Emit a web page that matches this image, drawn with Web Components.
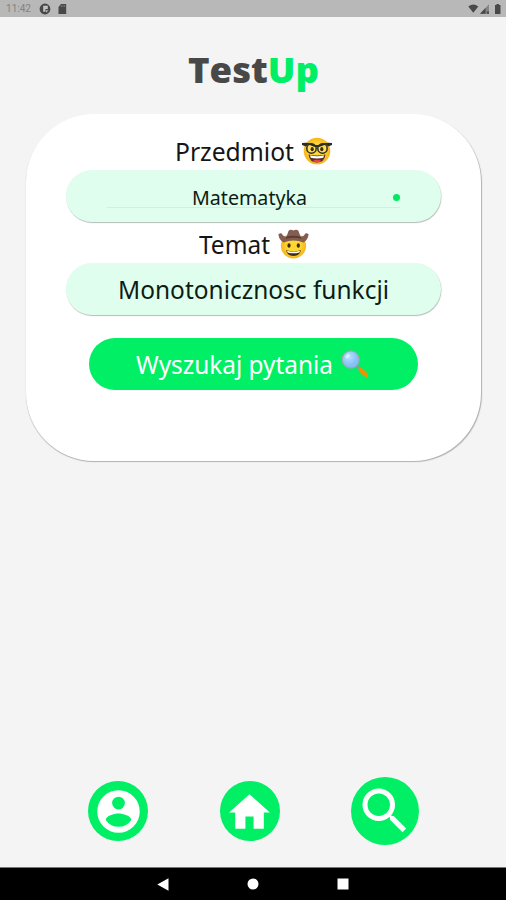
<!DOCTYPE html>
<html lang="pl">
<head>
<meta charset="utf-8">
<title>TestUp</title>
<style>
html,body{margin:0;height:100%;overflow:hidden}
</style>
</head>
<body>
<test-app></test-app>
<script>
const define = (name, html) => {
  const tpl = document.createElement('template');
  tpl.innerHTML = html;
  customElements.define(name, class extends HTMLElement {
    constructor() {
      super();
      this.attachShadow({mode: 'open'}).append(tpl.content.cloneNode(true));
    }
  });
};

/* Text set to a given width: the glyphs are scaled horizontally. */
customElements.define('fit-text', class extends HTMLElement {
  constructor() {
    super();
    this.attachShadow({mode: 'open'}).innerHTML = `<style>
      :host{display:block;white-space:nowrap;flex:none}
      span{display:inline-block;transform-origin:0 50%}
    </style><span><slot></slot></span>`;
  }
  connectedCallback() {
    const w = +this.getAttribute('w');
    this.style.width = w + 'px';
    const s = this.shadowRoot.querySelector('span');
    s.style.transform = `scaleX(${w / s.getBoundingClientRect().width})`;
  }
});

define('status-bar', `<style>
  :host{display:flex;box-sizing:border-box;height:17px;flex:none;background:#b8b8b8;align-items:center;padding:1px 2px 0 6px;color:#828282;font:10.5px/16px Roboto,sans-serif}
  svg{display:block}
  .l{margin-left:8px}.c{margin-left:7px}.r{margin-left:auto}
</style>
<fit-text w="25">11:42</fit-text>
<svg class="l" width="12" height="12" viewBox="0 0 12 12"><circle cx="6" cy="6" r="4.7" fill="#484848" stroke="#484848" stroke-width="1.4"/><path d="M4.2 2.800H8.800V6H6.500V8.800H4.200Z" fill="#c2c2c2"/><path d="M7 7.200H9.600L7 9.800Z" fill="#b8b8b8"/></svg>
<svg class="c" width="9" height="10" viewBox="0 0 9 10"><path d="M3 0H8.2V10H.5V3Z" fill="#484848"/><path d="M3.3 1.2V3M5 1.2V3M6.7 1.2V3" stroke="#8c8c8c" stroke-width=".7"/></svg>
<svg class="r" width="36" height="12" viewBox="0 0 36 12"><path d="M.3 3.500Q5.300-.3 10.300 3.500L5.300 9.800Z" fill="#484848"/><path d="M21 1.200V10.800H12Z" fill="#858585"/><path d="M17.500 5V10.800H12ZM18.800 8.500H21V10.800H18.800Z" fill="#484848"/><path d="M28.500 1H31V2H32.500V11H27V2H28.500Z" fill="#484848"/></svg>`);

define('app-logo', `<style>
  :host{display:flex;justify-content:center;flex:none;height:97px;box-sizing:border-box;padding-top:28px;font:800 36px/50px "Open Sans",sans-serif;font-kerning:none;color:#484848}
  b{font-weight:800;color:#00ef65}
</style><fit-text w="131">Test<b>Up</b></fit-text>`);

define('emoji-nerd', `<style>:host{display:block;flex:none}svg{display:block}</style>
<svg width="30" height="28" viewBox="0 0 30 28">
  <defs><radialGradient id="g"><stop offset=".5" stop-color="#fdd835"/><stop offset="1" stop-color="#f6b51e"/></radialGradient></defs>
  <circle cx="15" cy="14" r="13.3" fill="url(#g)"/>
  <path d="M6.500 17.500Q15 19.700 23.500 17.500Q22.500 25.500 15 25.500Q7.500 25.500 6.500 17.500Z" fill="#5a3329"/>
  <path d="M10.500 24Q15 21.400 19.500 24Q15 26.500 10.500 24Z" fill="#ef3f55"/>
  <path d="M8 18.300Q15 20 22 18.300L21.300 20.800Q15 22.300 8.700 20.800Z" fill="#fff"/>
  <circle cx="9.500" cy="11.500" r="4.700" fill="#ffe050" stroke="#2b2b2b" stroke-width="1.500"/>
  <circle cx="20.500" cy="11.500" r="4.700" fill="#ffe050" stroke="#2b2b2b" stroke-width="1.500"/>
  <path d="M0 6Q7 4.800 13 8H17Q23 4.800 30 6V8L26 9.500L24 7.500L17 10H13L6 7.500L4 9.500L0 8Z" fill="#2b2b2b"/>
  <ellipse cx="10.200" cy="12.200" rx="1.600" ry="2.100" fill="#422b0d"/><ellipse cx="19.800" cy="12.200" rx="1.600" ry="2.100" fill="#422b0d"/>
</svg>`);

define('emoji-cowboy', `<style>:host{display:block;flex:none}svg{display:block}</style>
<svg width="31" height="30" viewBox="0 0 31 30">
  <defs><radialGradient id="g"><stop offset=".5" stop-color="#fdd835"/><stop offset="1" stop-color="#f6b51e"/></radialGradient></defs>
  <circle cx="15.500" cy="16.800" r="12.600" fill="url(#g)"/>
  <ellipse cx="11" cy="16.500" rx="1.600" ry="2.300" fill="#422b0d"/><ellipse cx="20.300" cy="16.500" rx="1.600" ry="2.300" fill="#422b0d"/>
  <path d="M8 21.200Q15.500 23.500 23 21.200Q21.500 27 15.500 27Q9.500 27 8 21.200Z" fill="#422b0d"/>
  <path d="M9 21.700Q15.500 23.500 22 21.700L21.500 23.400Q15.500 25.100 9.500 23.400Z" fill="#fff"/>
  <path d="M.4 5.200Q3.500 3 4.300 5.600Q5 7.500 8.500 7.700L10.500 2Q12 .1 15.500 1.400Q19 .1 20.500 2L22.500 7.700Q26 7.500 26.700 5.600Q27.500 3 30.600 5.200Q30 11 25.500 13.500Q15.500 9.500 5.500 13.500Q1 11 .4 5.200Z" fill="#855c52"/>
  <path d="M8.300 7.700Q15.500 5.700 22.700 7.700L23.300 9.800Q15.500 7.700 7.700 9.800Z" fill="#593d36"/>
</svg>`);

define('emoji-lens', `<style>:host{display:block;flex:none}svg{display:block}</style>
<svg width="28" height="28" viewBox="0 0 28 28">
  <defs><radialGradient id="g" cx=".4" cy=".35"><stop offset="0" stop-color="#b9e2ff"/><stop offset="1" stop-color="#82c0f6"/></radialGradient></defs>
  <path d="M15.500 16L18.500 19" stroke="#90979b" stroke-width="3"/>
  <path d="M17 19.500L20 17.500Q25.500 21.500 27.300 25.500Q27.500 28 25 27.300Q20 24.500 17 19.500Z" fill="#fb8c00"/>
  <circle cx="9.700" cy="9.500" r="8.600" fill="url(#g)" stroke="#9ba7ad" stroke-width="1.200"/>
  <ellipse cx="6.700" cy="6.200" rx="2.600" ry="1.600" fill="#d8f0ff" transform="rotate(-40 6.700 6.200)"/>
</svg>`);

define('field-label', `<style>
  :host{display:flex;justify-content:center;align-items:center;gap:8px;flex:none;font-size:25.5px;line-height:34px;color:#151515}
</style><slot></slot>`);

define('field-pill', `<style>
  :host{display:grid;place-items:center;width:375px;height:52px;flex:none;border-radius:26px;background:#e0feee;box-shadow:.5px 1px 1px #b4bdb8;font-size:25.5px;line-height:34px;color:#0c1c14}
</style><slot></slot>`);

define('select-box', `<style>
  :host{display:grid;grid-template-columns:85px auto 1fr;align-items:center;width:293px;height:22px;line-height:22px;border-bottom:1px solid #d0efe0;font-size:20px;padding-top:1px;box-sizing:border-box}
  i{grid-column:3;justify-self:end;width:7px;height:7px;border-radius:50%;background:#00e95f}
  slot{display:block;grid-column:2}
</style><slot></slot><i></i>`);

define('search-button', `<style>
  :host{display:flex;justify-content:center;align-items:center;gap:8px;width:329px;height:52px;flex:none;border-radius:26px;background:#00ef65;color:#fff;font-size:25.5px;line-height:34px;box-sizing:border-box;padding-right:2px}
</style><slot></slot>`);

define('search-card', `<style>
  :host{display:flex;flex-direction:column;align-items:center;flex:none;margin:0 25px 0 26px;height:347px;box-sizing:border-box;border-radius:68px;background:#fff;box-shadow:.5px 1px 1px #b0b0b0}
  .a{height:56px;padding-top:18px;box-sizing:border-box}
  .b{height:41px;padding-top:3px;box-sizing:border-box}
  search-button{margin-top:23px}
  select-box{margin-top:1px}
</style>
<field-label class="a"><fit-text w="119">Przedmiot</fit-text><emoji-nerd></emoji-nerd></field-label>
<field-pill><select-box><fit-text w="115">Matematyka</fit-text></select-box></field-pill>
<field-label class="b"><fit-text w="71">Temat</fit-text><emoji-cowboy></emoji-cowboy></field-label>
<field-pill><fit-text w="271">Monotonicznosc funkcji</fit-text></field-pill>
<search-button><fit-text w="197">Wyszukaj pytania</fit-text><emoji-lens></emoji-lens></search-button>`);

define('round-button', `<style>
  :host{display:grid;place-items:center;width:var(--d,60px);height:var(--d,60px);border-radius:50%;background:#00ef65;flex:none}
</style><slot></slot>`);

define('bottom-nav', `<style>
  :host{display:flex;align-items:center;height:68px;margin:auto 87px 22px 88px;justify-content:space-between;flex:none}
  svg{display:block;fill:#fff}
  .s{--d:68px}
</style>
<round-button><svg width="51" height="51" viewBox="0 0 24 24"><path fill-rule="evenodd" d="M12 2a10 10 0 1 0 0 20a10 10 0 0 0 0-20zm0 3a3 3 0 1 1 0 6a3 3 0 0 1 0-6zm0 14.2a7.2 7.2 0 0 1-6-3.22c.03-1.99 4-3.08 6-3.08s5.970 1.090 6 3.080a7.200 7.200 0 0 1-6 3.220z"/></svg></round-button>
<round-button><svg width="49" height="49" viewBox="0 0 24 24"><path d="M10 20.500v-6h4v6h5v-8h3L12 3.500 2 12.500h3v8z"/></svg></round-button>
<round-button class="s"><svg width="60" height="60" viewBox="0 0 24 24"><path d="M15.500 14h-.790l-.280-.270A6.470 6.470 0 0 0 16 9.500 6.500 6.500 0 1 0 9.500 16c1.610 0 3.090-.590 4.230-1.570l.270.280v.790l5 4.990L20.490 19l-4.990-5zm-6 0C7.010 14 5 11.990 5 9.500S7.010 5 9.500 5 14 7.010 14 9.500 11.990 14 9.500 14z"/></svg></round-button>`);

define('system-nav', `<style>
  :host{display:flex;height:33px;flex:none;box-sizing:border-box;background:#000;border-top:1px solid #777;justify-content:center;align-items:center;gap:78px}
  svg{display:block;fill:#fff}
</style>
<svg width="12" height="13" viewBox="0 0 12 13"><path d="M11.500.3V12.700L.3 6.500Z"/></svg>
<svg width="12" height="12" viewBox="0 0 12 12"><circle cx="6" cy="6" r="5.500"/></svg>
<svg width="12" height="12" viewBox="0 0 12 12"><path d="M.5.5H11.500V11.500H.5Z"/></svg>`);

define('test-app', `<style>
  :host{display:flex;flex-direction:column;height:900px;background:#f4f4f4;font-family:"Noto Sans","Open Sans",sans-serif}
</style>
<status-bar></status-bar><app-logo></app-logo><search-card></search-card><bottom-nav></bottom-nav><system-nav></system-nav>`);
</script>
</body>
</html>
